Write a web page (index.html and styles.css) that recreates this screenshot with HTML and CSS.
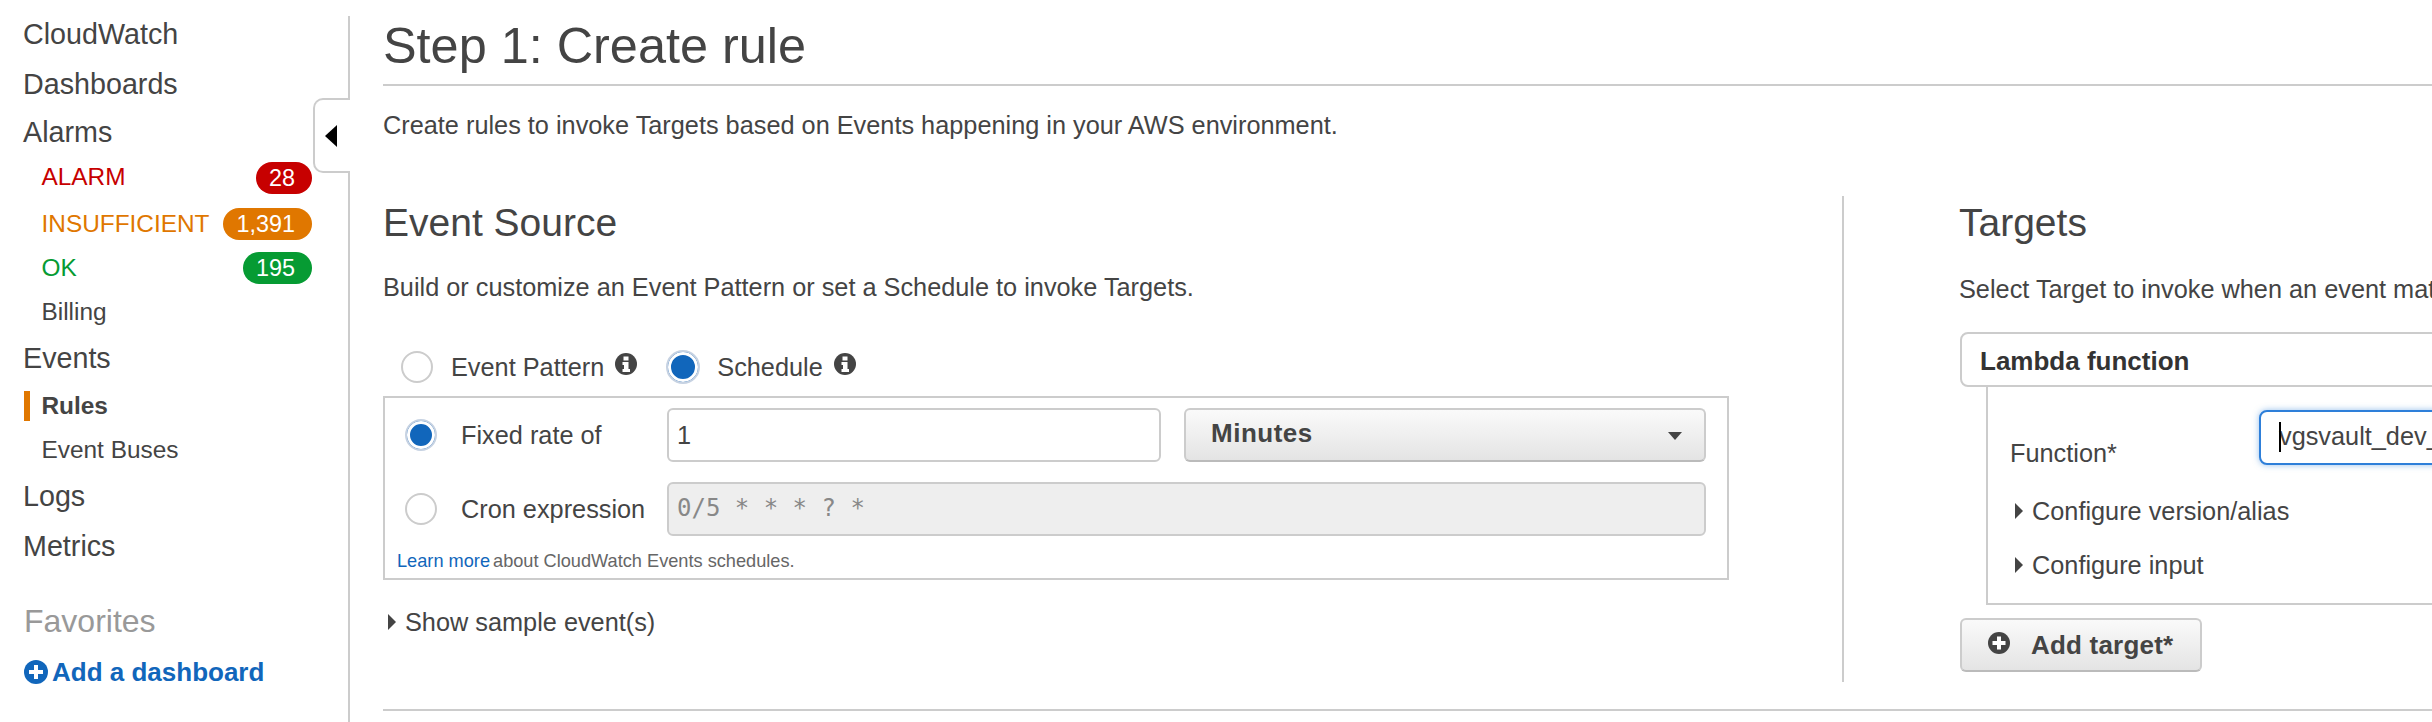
FILE: index.html
```html
<!DOCTYPE html>
<html lang="en">
<head>
<meta charset="utf-8">
<title>Step 1: Create rule</title>
<link rel="stylesheet" href="styles.css">
</head>
<body>
<div class="page">
  <nav class="sidebar">
    <div class="tab"><span class="tab-arrow"></span></div>
    <a class="nav nav-first">CloudWatch</a>
    <a class="nav nav-dash">Dashboards</a>
    <a class="nav nav-alarms">Alarms</a>
    <a class="sub sub-alarm"><span class="red">ALARM</span><span class="badge bg-red">28</span></a>
    <a class="sub"><span class="orange">INSUFFICIENT</span><span class="badge bg-orange">1,391</span></a>
    <a class="sub"><span class="green">OK</span><span class="badge bg-green">195</span></a>
    <a class="sub">Billing</a>
    <a class="nav nav-events">Events</a>
    <a class="sub active">Rules</a>
    <a class="sub">Event Buses</a>
    <a class="nav nav-logs">Logs</a>
    <a class="nav">Metrics</a>
    <div class="favorites">Favorites</div>
    <a class="add-dash">
      <svg class="plus-big" viewBox="0 0 24 24"><circle cx="12" cy="12" r="12" fill="#1166bb"/><path d="M10 5h4v5h5v4h-5v5h-4v-5H5v-4h5z" fill="#fff"/></svg>
      <span>Add a dashboard</span>
    </a>
  </nav>
  <main class="main">
    <h1 class="title">Step 1: Create rule</h1>
    <p class="intro">Create rules to invoke Targets based on Events happening in your AWS environment.</p>
    <div class="columns">
      <section class="col-left">
        <h2 class="section-title">Event Source</h2>
        <p class="section-text">Build or customize an Event Pattern or set a Schedule to invoke Targets.</p>
        <div class="mode-row">
          <span class="radio"></span>
          <span class="mode-label">Event Pattern</span>
          <svg class="info" viewBox="0 0 22 22"><circle cx="11" cy="11" r="11" fill="#444"/><path d="M8.500 3.500h5v4h-5zM7.500 9h6v7h1.500v3H7.500v-3H9v-4H7.500z" fill="#fff"/></svg>
          <span class="radio radio-on radio-big"></span>
          <span class="mode-label">Schedule</span>
          <svg class="info" viewBox="0 0 22 22"><circle cx="11" cy="11" r="11" fill="#444"/><path d="M8.500 3.500h5v4h-5zM7.500 9h6v7h1.500v3H7.500v-3H9v-4H7.500z" fill="#fff"/></svg>
        </div>
        <div class="schedule-box">
          <div class="sched-row">
            <span class="radio radio-on"></span>
            <span class="sched-label">Fixed rate of</span>
            <div class="field field-rate">1</div>
            <div class="select">Minutes<span class="select-arrow"></span></div>
          </div>
          <div class="sched-row sched-row-cron">
            <span class="radio"></span>
            <span class="sched-label">Cron expression</span>
            <div class="field field-cron">0/5 * * * ? *</div>
          </div>
          <div class="note"><a class="link">Learn more</a><span class="note-text">about CloudWatch Events schedules.</span></div>
        </div>
        <div class="disclosure disclosure-sample"><span class="tri"></span>Show sample event(s)</div>
      </section>
      <section class="col-right">
        <h2 class="section-title section-title-right">Targets</h2>
        <p class="section-text section-text-right">Select Target to invoke when an event matches your Event Pattern or on a Schedule.</p>
        <div class="target-head">Lambda function</div>
        <div class="target-body">
          <div class="fn-row">
            <span class="fn-label">Function*</span>
            <div class="field field-focus"><span class="caret"></span>vgsvault_dev_</div>
          </div>
          <div class="disclosure disclosure-version"><span class="tri"></span>Configure version/alias</div>
          <div class="disclosure disclosure-input"><span class="tri"></span>Configure input</div>
        </div>
        <div class="add-target">
          <svg class="info" viewBox="0 0 22 22"><circle cx="11" cy="11" r="11" fill="#444"/><path d="M9 4.500h4V9h4.500v4H13v4.500H9V13H4.500V9H9z" fill="#fff"/></svg>
          <span>Add target*</span>
        </div>
      </section>
    </div>
    <div class="rule"></div>
  </main>
</div>
</body>
</html>
```
FILE: styles.css
```css
* { box-sizing: border-box; }
html, body { margin: 0; padding: 0; background: #fff; }
body {
  width: 2432px;
  height: 722px;
  overflow: hidden;
  font-family: "Liberation Sans", Arial, sans-serif;
  color: #444;
}
.page { display: flex; height: 722px; overflow: hidden; }

/* sidebar */
.sidebar {
  position: relative;
  flex: 0 0 350px;
  margin-top: 16px;
  padding: 0 36px 0 24px;
  border-right: 2px solid #ccc;
  height: 706px;
  display: flex;
  flex-direction: column;
}
.nav {
  display: block;
  height: 49px;
  margin-left: -1px;
  line-height: 50px;
  font-size: 28.700px;
  color: #444;
}
.nav-first { margin-top: -7px; height: 50px; }
.nav-dash { height: 48px; }
.nav-alarms { height: 48px; }
.nav-events { margin-top: -1px; height: 51px; }
.nav-logs { margin-top: -1px; height: 50px; }
.sub {
  position: relative;
  display: flex;
  justify-content: space-between;
  align-items: center;
  height: 44px;
  line-height: 44px;
  padding-left: 17.500px;
  font-size: 24.400px;
  color: #444;
}
.sub-alarm { margin-bottom: 3px; }
.active { font-weight: bold; }
.active::before {
  content: "";
  position: absolute;
  left: 0;
  top: 7px;
  width: 6px;
  height: 30px;
  background: #e07700;
}
.red { color: #c70000; }
.orange { color: #e07700; }
.green { color: #069b33; }
.badge {
  display: block;
  height: 32px;
  line-height: 32px;
  padding: 0 17px 0 13px;
  border-radius: 16px;
  color: #fff;
  font-size: 23.400px;
}
.bg-red { background: #c70000; transform: translateY(1px); }
.bg-orange { background: #e07700; }
.bg-green { background: #069b33; }
.tab {
  position: absolute;
  top: 82px;
  right: -2px;
  width: 37px;
  height: 75px;
  border: 2px solid #ccc;
  border-right: 0;
  border-radius: 10px 0 0 10px;
  background: #fff;
  display: flex;
  align-items: center;
  padding-left: 10px;
}
.tab-arrow {
  width: 0;
  height: 0;
  border-style: solid;
  border-width: 11px 12px 11px 0;
  border-color: transparent #000 transparent transparent;
}
.favorites {
  margin-top: 26px;
  height: 50px;
  line-height: 50px;
  font-size: 32px;
  color: #999;
}
.add-dash {
  display: flex;
  align-items: center;
  gap: 4px;
  height: 50px;
  margin-top: 1px;
  font-size: 26px;
  font-weight: bold;
  color: #1166bb;
}
.plus-big { width: 24px; height: 24px; flex: none; }

/* main */
.main { flex: 1; min-width: 0; padding: 16px 0 0 33px; overflow: hidden; }
.title {
  margin: 0;
  font-size: 50.400px;
  font-weight: normal;
  line-height: 60px;
  height: 70px;
  padding-bottom: 8px;
  border-bottom: 2px solid #ccc;
}
.intro {
  margin: 21px 0 0;
  font-size: 25.300px;
  line-height: 36px;
}
.columns { display: flex; margin-top: 53px; }
.col-left {
  flex: 0 0 1461px;
  height: 486px;
  border-right: 2px solid #ccc;
}
.col-right { flex: 0 0 1300px; padding-left: 116px; }
.section-title {
  margin: 3px 0 0;
  font-size: 39px;
  font-weight: normal;
  line-height: 48px;
}
.section-title-right { margin-left: -1px; }
.section-text {
  margin: 22px 0 0;
  font-size: 25.300px;
  line-height: 36px;
}
.section-text-right { margin: 24px 0 0 -1px; white-space: nowrap; }
.mode-row {
  display: flex;
  align-items: center;
  height: 36px;
  margin-top: 44px;
  padding-left: 18px;
  font-size: 25.300px;
}
.mode-label { margin-left: 18px; margin-right: 11px; }
.info { width: 22px; height: 22px; flex: none; position: relative; top: -3px; }
.radio {
  display: block;
  width: 32px;
  height: 32px;
  flex: none;
  border-radius: 50%;
  border: 2px solid #ccc;
  background: #fff;
}
.radio-on {
  border: 2px solid #c6d2e2;
  background: #1166bb;
  box-shadow: inset 0 0 0 3px #fff;
}
.radio-big { width: 34px; height: 34px; margin-left: 29px; margin-right: -1px; }
.schedule-box {
  width: 1346px;
  height: 184px;
  margin-top: 11px;
  border: 2px solid #ccc;
  padding-top: 10px;
}
.sched-row {
  display: flex;
  align-items: center;
  height: 54px;
  padding-left: 20px;
  padding-right: 21px;
  font-size: 25.300px;
}
.sched-row-cron { margin-top: 20px; }
.sched-label { width: 206px; margin-left: 24px; flex: none; }
.field {
  position: relative;
  height: 54px;
  line-height: 50px;
  padding-left: 8px;
  border: 2px solid #ccc;
  border-radius: 6px;
  background: #fff;
  font-size: 25.300px;
  color: #444;
}
.field-rate { width: 494px; flex: none; }
.field-cron {
  flex: 1;
  background: #eee;
  font-family: "DejaVu Sans Mono", monospace;
  font-size: 24px;
  color: #888;
  line-height: 48px;
}
.select {
  position: relative;
  flex: 1;
  height: 54px;
  margin-left: 23px;
  padding-left: 25px;
  line-height: 46px;
  border: 2px solid #ccc;
  border-bottom-color: #bbb;
  border-radius: 6px;
  background: linear-gradient(#fafafa, #e4e4e4);
  font-size: 26px;
  font-weight: bold;
  letter-spacing: 0.5px;
}
.select-arrow {
  position: absolute;
  right: 22px;
  top: 22px;
  width: 0;
  height: 0;
  border-style: solid;
  border-width: 8px 7.500px 0;
  border-color: #444 transparent transparent;
}
.note {
  display: flex;
  margin-top: 13px;
  padding-left: 12px;
  font-size: 18.200px;
  line-height: 24px;
}
.link { color: #1166bb; }
.note-text { margin-left: 3px; color: #666; }
.disclosure {
  display: flex;
  align-items: center;
  height: 36px;
  font-size: 25.300px;
  line-height: 36px;
}
.disclosure-sample { margin-top: 24px; padding-left: 5px; }
.tri {
  width: 0;
  height: 0;
  margin-right: 9px;
  border-style: solid;
  border-width: 8px 0 8px 8px;
  border-color: transparent transparent transparent #444;
}

/* targets */
.target-head {
  margin-top: 25px;
  height: 55px;
  line-height: 54px;
  padding-left: 18px;
  border: 2px solid #ccc;
  border-radius: 8px;
  font-size: 26px;
  font-weight: bold;
  color: #333;
}
.target-body {
  margin-left: 26px;
  height: 218px;
  padding: 23px 0 0 22px;
  border-left: 2px solid #ccc;
  border-bottom: 2px solid #ccc;
}
.fn-row { display: flex; }
.fn-label {
  flex: 0 0 249px;
  padding-top: 25px;
  font-size: 25.300px;
  line-height: 36px;
}
.field-focus {
  flex: 1;
  height: 55px;
  padding-left: 18px;
  line-height: 49px;
  border-color: #2e7fd9;
  border-radius: 8px;
  box-shadow: 0 0 6px rgba(46, 127, 217, 0.5);
}
.caret {
  position: absolute;
  left: 18px;
  top: 10px;
  width: 2px;
  height: 30px;
  background: #000;
}
.disclosure-version { margin-top: 22px; padding-left: 5px; }
.disclosure-input { margin-top: 18px; padding-left: 5px; }
.add-target {
  display: flex;
  align-items: center;
  gap: 21px;
  width: 242px;
  height: 54px;
  margin-top: 13px;
  padding-left: 26px;
  border: 2px solid #ccc;
  border-bottom-color: #bbb;
  border-radius: 6px;
  background: linear-gradient(#fafafa, #e4e4e4);
  font-size: 26px;
  font-weight: bold;
  letter-spacing: 0.2px;
}
.add-target .info { top: -2px; }
.rule { height: 2px; margin-top: 27px; background: #ccc; }
```
